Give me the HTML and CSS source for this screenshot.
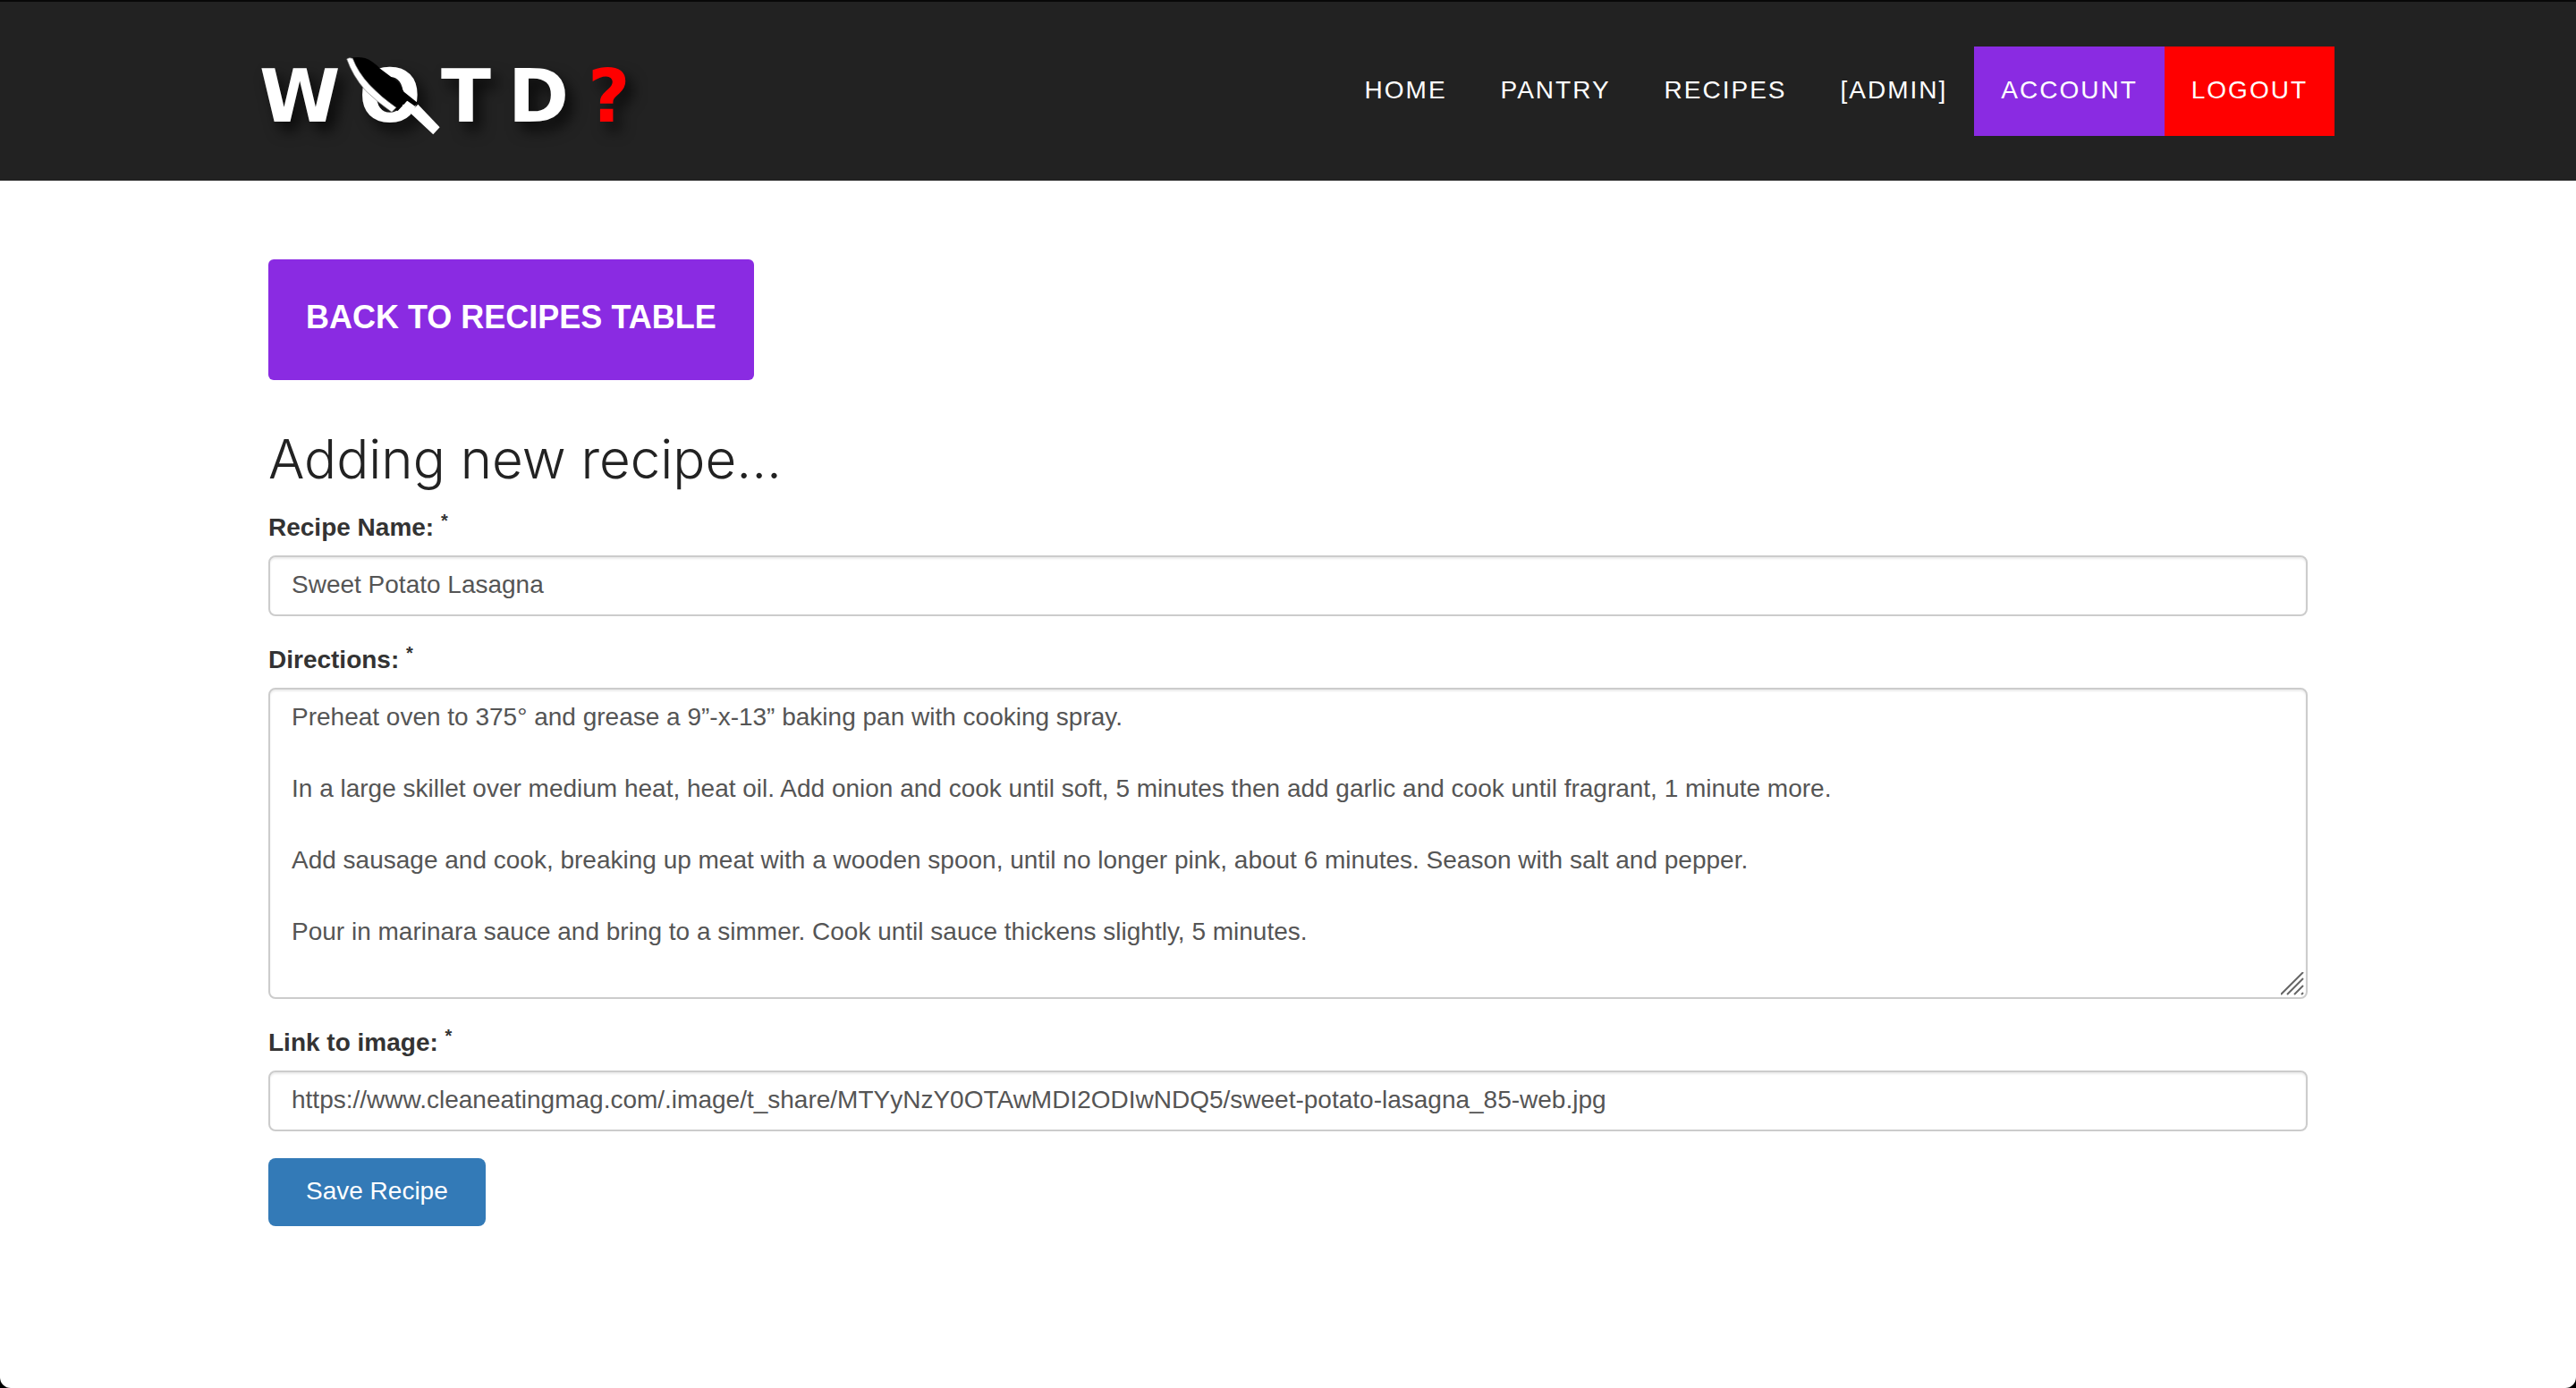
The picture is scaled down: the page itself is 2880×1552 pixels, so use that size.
FILE: index.html
```html
<!DOCTYPE html>
<html lang="en">
<head>
<meta charset="utf-8">
<meta name="viewport" content="width=device-width, initial-scale=1">
<title>WOTD? - Add recipe</title>
<link rel="stylesheet" href="styles.css">
</head>
<body>
<header class="navbar">
  <div class="container navbar-inner">
    <a class="brand" href="#" aria-label="WOTD?">
      <svg class="logo" width="480" height="130" viewBox="0 0 480 130" aria-hidden="true">
        <g class="logo-text">
          <text y="96" x="20 131 223 298">WOTD</text>
          <text class="logo-mark" y="96" x="387">?</text>
        </g>
        <g transform="scale(.3333)">
          <path fill="#000" d="M366 74 Q392 70 415 75 Q440 84 465 110 L525 155 L545 188 L590 224 L582 236 L556 218 L524 252 L500 244 Q410 170 366 74Z"/>
          <path fill="#fff" stroke="#777" stroke-width="2" d="M353 78 Q362 71 373 76 Q390 122 430 165 Q470 207 519 241 L504 256 Q455 222 416 184 Q373 135 353 78Z"/>
          <path fill="#fff" d="M592 230 L665 307 L643 331 L565 258Z"/>
          <path stroke="#fff" stroke-width="4" d="M541 232 L565 252 M552 222 L576 240"/>
        </g>
      </svg>
    </a>
    <nav class="menu">
      <a class="menu-link" href="#">HOME</a>
      <a class="menu-link" href="#">PANTRY</a>
      <a class="menu-link" href="#">RECIPES</a>
      <a class="menu-link" href="#">[ADMIN]</a>
      <a class="menu-link menu-account" href="#">ACCOUNT</a>
      <a class="menu-link menu-logout" href="#">LOGOUT</a>
    </nav>
  </div>
</header>
<main class="container content">
  <a class="back" href="#">BACK TO RECIPES TABLE</a>
  <h1 class="title">Adding new recipe...</h1>
  <form class="form">
    <div class="group">
      <label class="label" for="name">Recipe Name: <sup class="req">*</sup></label>
      <input class="field" id="name" type="text" value="Sweet Potato Lasagna">
    </div>
    <div class="group">
      <label class="label" for="directions">Directions: <sup class="req">*</sup></label>
      <div class="area">
        <textarea class="field field-area" id="directions" rows="8">Preheat oven to 375° and grease a 9”-x-13” baking pan with cooking spray.

In a large skillet over medium heat, heat oil. Add onion and cook until soft, 5 minutes then add garlic and cook until fragrant, 1 minute more.

Add sausage and cook, breaking up meat with a wooden spoon, until no longer pink, about 6 minutes. Season with salt and pepper.

Pour in marinara sauce and bring to a simmer. Cook until sauce thickens slightly, 5 minutes.</textarea>
        <svg class="grip" width="30" height="30" viewBox="0 0 30 30" aria-hidden="true"><path d="M0 25L25 0M7 25L25 7M15 25L25 15M23 25L25 23"/></svg>
      </div>
    </div>
    <div class="group">
      <label class="label" for="image">Link to image: <sup class="req">*</sup></label>
      <input class="field" id="image" type="text" value="https://www.cleaneatingmag.com/.image/t_share/MTYyNzY0OTAwMDI2ODIwNDQ5/sweet-potato-lasagna_85-web.jpg">
    </div>
    <button class="save" type="submit">Save Recipe</button>
  </form>
</main>
</body>
</html>
```
FILE: styles.css
```css
* { box-sizing: border-box; }

html { background: #000; }

body {
  margin: 0;
  min-height: 100vh;
  background: #fff;
  border-radius: 0 0 12px 12px;
  color: #333;
  font: 28px/40px "Liberation Sans", Arial, sans-serif;
}

.container {
  max-width: 2340px;
  margin: 0 auto;
}

.navbar {
  background: #222;
  border-top: 2px solid #080808;
}

.navbar-inner {
  display: flex;
  justify-content: space-between;
  align-items: flex-start;
  padding-bottom: 32px;
}

.brand {
  display: block;
  padding-top: 38px;
}

.logo { display: block; }

.logo-text {
  fill: #fff;
  font: bold 82px "DejaVu Sans", sans-serif;
  filter: drop-shadow(8px 10px 8px rgba(0, 0, 0, .7));
}

.logo-mark { fill: #f00; }

.menu {
  display: flex;
  padding-top: 50px;
}

.menu-link {
  padding: 29px 30px 31px;
  color: #fff;
  letter-spacing: 2px;
  text-decoration: none;
}

.menu-account { background: #8a2be2; }
.menu-logout { background: #f00; }

.content { padding: 88px 30px; }

.back {
  display: inline-block;
  vertical-align: top;
  padding: 39px 42px 44px;
  border-radius: 6px;
  background: #8a2be2;
  color: #fff;
  font-size: 36px;
  font-weight: bold;
  line-height: 52px;
  text-decoration: none;
}

.title {
  margin: 55px 0 24px;
  color: #222;
  font: 300 60px/66px Inter, "Liberation Sans", sans-serif;
}

.group { margin-bottom: 29px; }

.label {
  display: block;
  margin-bottom: 11px;
  font-weight: bold;
}

.req {
  font-size: 20px;
  line-height: 0;
  vertical-align: 10px;
}

.field {
  display: block;
  width: 100%;
  padding: 11px 24px 13px;
  border: 2px solid #ccc;
  border-radius: 8px;
  background: #fff;
  box-shadow: inset 0 2px 2px rgba(0, 0, 0, .075);
  color: #555;
  font: inherit;
}

input.field { height: 68px; }

.area { position: relative; }

.field-area {
  resize: none;
  overflow: hidden;
}

.grip {
  position: absolute;
  right: 0;
  bottom: 0;
  fill: none;
  stroke: #666;
  stroke-width: 2;
}

.save {
  display: block;
  margin-top: 30px;
  padding: 17px 42px 19px;
  border: 0;
  border-radius: 8px;
  background: #337ab7;
  color: #fff;
  font: inherit;
}
```
